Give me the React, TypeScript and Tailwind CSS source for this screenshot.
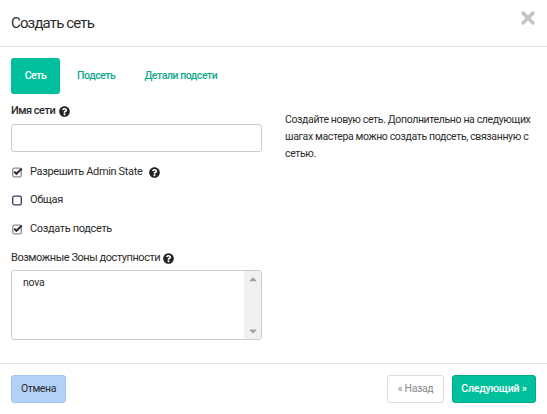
import React from "react";
import { FaQuestionCircle, FaTimes, FaCaretUp, FaCaretDown } from "react-icons/fa";

function Box({ checked }: { checked: boolean }) {
  return (
    <svg width="13" height="13" viewBox="0 0 13 13" className="block">
      <rect x="1.7" y="2.2" width="8.6" height="8.6" rx="1.6" fill="none" stroke={checked ? "#8d8d95" : "#3f3560"} strokeWidth="1.3" />
      {checked && <path d="M3.2 5.6 L5.4 7.8 L10.8 2.6" fill="none" stroke="#2b2b2b" strokeWidth="2" />}
    </svg>
  );
}

function Check({ checked, label, help }: { checked: boolean; label: string; help?: boolean }) {
  return (
    <div className="flex items-center h-[14px] text-[11px] tracking-[-0.35px] text-[#2b2b2b]">
      <span className="w-[19px] flex">
        <Box checked={checked} />
      </span>
      <span>{label}</span>
      {help && <FaQuestionCircle className="ml-[7px] w-[11px] h-[11px] text-[#222]" />}
    </div>
  );
}

export default function App() {
  return (
    <div className="w-[547px] h-[414px] bg-white flex flex-col overflow-hidden text-[#2b2b2b]" style={{ fontFamily: 'Roboto, sans-serif' }}>
      <header className="h-[47px] shrink-0 border-b border-[#e5e5e5] flex items-center justify-between pl-[11px] pr-[12px]">
        <h1 className="text-[15px] tracking-[-0.85px] text-[#2b2b2b] leading-none font-normal">Создать сеть</h1>
        <FaTimes className="w-[14px] h-[20px] text-[#c4c4c4] -mt-[10px]" />
      </header>

      <main className="flex-1 flex flex-col px-[11px] pt-[11px]">
        <nav className="flex items-center h-[36px] text-[10.5px] tracking-[-0.45px] font-medium text-[#11a98c]">
          <span className="w-[49px] h-[36px] rounded-[3px] bg-[#00bf9c] text-white flex items-center justify-center">Сеть</span>
          <span className="ml-[17px]">Подсеть</span>
          <span className="ml-[29px]">Детали подсети</span>
        </nav>

        <div className="flex mt-[10px]">
          <div className="w-[251px] shrink-0 flex flex-col">
            <label className="flex items-center h-[14px] text-[11px] tracking-[-0.5px] font-medium">
              Имя сети
              <FaQuestionCircle className="ml-[4px] w-[11px] h-[11px] text-[#222]" />
            </label>
            <div className="mt-[6px] h-[28px] rounded-[3px] border border-[#ccc] bg-white" />
            <div className="mt-[13px] flex flex-col gap-[14.5px]">
              <Check checked label="Разрешить Admin State" help />
              <Check checked={false} label="Общая" />
              <Check checked label="Создать подсеть" />
            </div>
            <label className="mt-[15px] flex items-center h-[14px] text-[11px] tracking-[-0.45px]">
              Возможные Зоны доступности
              <FaQuestionCircle className="ml-[3px] w-[11px] h-[11px] text-[#222]" />
            </label>
            <div className="mt-[5px] h-[70px] rounded-[3px] border border-[#ccc] bg-white flex overflow-hidden">
              <div className="flex-1 pl-[11px] pt-[4px] text-[10.5px] tracking-[-0.2px] leading-[16px]">nova</div>
              <div className="w-[17px] bg-[#f1f1f1] flex flex-col items-center justify-between py-[2px] text-[#a3a3a3]">
                <FaCaretUp className="w-[12px] h-[12px]" />
                <FaCaretDown className="w-[12px] h-[12px]" />
              </div>
            </div>
          </div>
          <p className="ml-[23px] mt-[7px] text-[10.5px] tracking-[-0.36px] leading-[17px] text-[#2b2b2b] w-[252px]">
            Создайте новую сеть. Дополнительно на следующих шагах мастера можно создать подсеть, связанную с сетью.
          </p>
        </div>
      </main>

      <footer className="h-[51px] shrink-0 border-t border-[#e5e5e5] flex items-start pt-[11px] pl-[11px] pr-[11px] text-[10.5px] tracking-[-0.4px]">
        <button className="w-[55px] h-[28px] rounded-[3px] bg-[#b3d1f6] border border-[#a3c5f0] text-[#2b2b2b]">Отмена</button>
        <div className="ml-auto flex gap-[8px]">
          <button className="w-[57px] h-[28px] rounded-[3px] border border-[#ddd] bg-white text-[#8a8a8a]">« Назад</button>
          <button className="w-[84px] h-[28px] rounded-[3px] bg-[#00bf9c] border border-[#00a987] text-white font-medium tracking-[-0.2px]">Следующий »</button>
        </div>
      </footer>
    </div>
  );
}
